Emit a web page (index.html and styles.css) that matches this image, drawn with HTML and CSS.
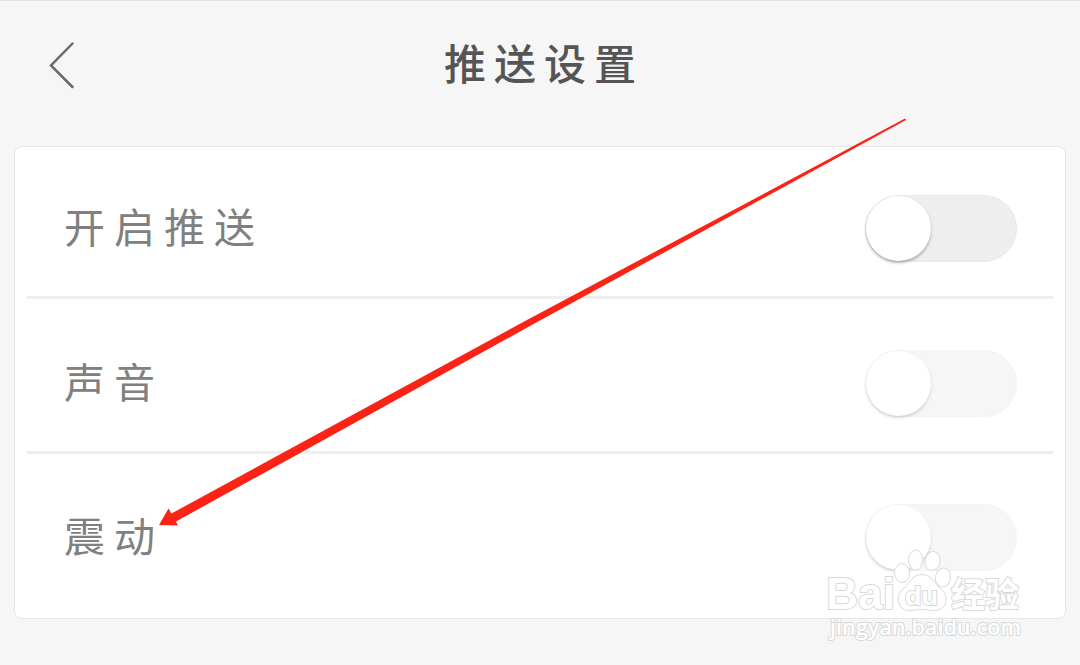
FILE: index.html
```
<!DOCTYPE html>
<html lang="zh-CN">
<head>
<meta charset="UTF-8">
<meta name="viewport" content="width=device-width, initial-scale=1.0">
<title>推送设置</title>
<link rel="stylesheet" href="styles.css">
</head>
<body>
<div class="page">
    <header>
        <svg class="back" width="30" height="50" viewBox="0 0 30 50">
            <path d="M25.500 3.500L4 25.500L25.500 47" />
        </svg>
        <h1>推送设置</h1>
    </header>
    <ul class="list">
        <li>
            <span>开启推送</span>
            <i class="switch"></i>
        </li>
        <li>
            <span>声音</span>
            <i class="switch disabled"></i>
        </li>
        <li>
            <span>震动</span>
            <i class="switch disabled"></i>
        </li>
    </ul>
    <svg class="arrow" width="1080" height="665" viewBox="0 0 1080 665">
        <path d="M905 118.500L906 120L530 326L176 521.500L178 525.500L159 525L168.500 508.500L171.500 513.500L526 320.500Z" />
    </svg>
    <svg class="mark" width="210" height="100" viewBox="820 545 210 100">
        <text class="logo" x="826" y="609" textLength="69" lengthAdjust="spacingAndGlyphs">Bai</text>
        <ellipse cx="902" cy="573" rx="7.500" ry="9.500" />
        <ellipse cx="915.500" cy="560" rx="7" ry="10" />
        <ellipse cx="932.500" cy="561" rx="7.500" ry="9.500" transform="rotate(12 932.500 561)" />
        <ellipse cx="943" cy="577.500" rx="7.500" ry="9.500" transform="rotate(10 943 577.500)" />
        <path d="M922 574.500C912 574.500 909 584 903 589C897 594 897 602 901 607C906 613 914 609.500 922 609.500C930 609.500 938 613 943 607C948 602 947 594 941 589C935 584 932 574.500 922 574.500Z" />
        <text class="du" x="905" y="605" textLength="33" lengthAdjust="spacingAndGlyphs">du</text>
        <text class="cn" x="951" y="607" textLength="68" lengthAdjust="spacingAndGlyphs">经验</text>
        <text class="url" x="830" y="635" textLength="191" lengthAdjust="spacingAndGlyphs">jingyan.baidu.com</text>
    </svg>
</div>
</body>
</html>
```
FILE: styles.css
```
* {
    box-sizing: border-box;
}
body {
    margin: 0;
    background: #f6f6f6;
    font-family: "Noto Sans CJK SC", sans-serif;
}
.page {
    position: relative;
    height: 665px;
    overflow: hidden;
    border-top: 1px solid #e4e4e4;
}
header {
    display: grid;
    grid-template-columns: 1fr auto 1fr;
    align-items: center;
    height: 145px;
    padding: 0 47px 17px;
}
.back {
    fill: none;
    stroke: #6a6a6a;
    stroke-width: 2.500;
    stroke-linecap: round;
}
h1 {
    margin: 0;
    padding: 0 0 6px 8px;
    color: #555;
    font-size: 42px;
    font-weight: 500;
    line-height: 60px;
    letter-spacing: 8px;
}
.list {
    display: grid;
    grid-template-rows: 152px 155px 1fr;
    width: 1052px;
    height: 473px;
    margin: 0 auto;
    padding: 0 12px;
    list-style: none;
    background: #fff;
    border: 1px solid #e6e6e6;
    border-radius: 8px;
}
.list li {
    display: flex;
    align-items: flex-end;
    justify-content: space-between;
    padding: 0 36px 34px 37px;
    border-bottom: 3px solid #eee;
}
.list li:last-child {
    padding-bottom: 47px;
    border: 0;
}
.list span {
    padding-bottom: 4px;
    color: #808080;
    font-size: 41px;
    font-weight: 400;
    line-height: 66px;
    letter-spacing: 9px;
}
.switch {
    width: 152px;
    height: 67px;
    border: 1px solid #e9e9e9;
    border-radius: 34px;
    background: #eee;
}
.switch::before {
    content: "";
    display: block;
    width: 65px;
    height: 65px;
    border-radius: 50%;
    background: #fff;
    box-shadow: 0 2px 3px rgba(0, 0, 0, .3);
}
.disabled {
    opacity: .5;
}
.arrow {
    position: absolute;
    top: -1px;
    left: 0;
    fill: #fb2315;
}
.mark {
    position: absolute;
    left: 820px;
    top: 544px;
    fill: #fff;
    stroke: #d9d9d9;
    stroke-width: 1;
}
.mark text {
    stroke-width: 2;
    paint-order: stroke;
}
.logo, .du {
    font-family: "Liberation Sans", sans-serif;
    font-weight: bold;
}
.logo {
    font-size: 45px;
}
.du {
    font-size: 26px;
}
.cn {
    font-size: 34px;
    font-weight: 700;
}
.url {
    font-family: "Open Sans", sans-serif;
    font-size: 21px;
    font-weight: 600;
}
```
